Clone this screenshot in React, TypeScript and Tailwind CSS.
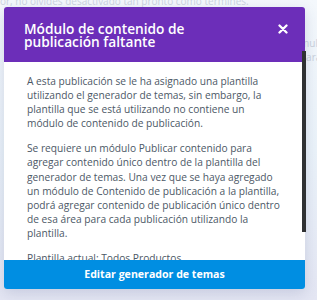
import React from "react";

const font = { fontFamily: '"Open Sans", "Noto Sans", sans-serif' };

function CloseIcon() {
  return (
    <svg width="10" height="10" viewBox="0 0 10 10" className="block">
      <path d="M1.5 1.5 L8.5 8.5 M8.5 1.5 L1.5 8.5" stroke="#fff" strokeWidth="2.3" strokeLinecap="round" />
    </svg>
  );
}

export default function App() {
  return (
    <div
      className="relative w-[317px] h-[300px] overflow-hidden bg-gradient-to-b from-[#f4f8fc] via-[#eaf2f9] to-[#e4e6f3]"
      style={font}
    >
      {/* page behind the overlay */}
      <div className="absolute left-0 top-[-6px] text-[10px] text-[#ccd4df] whitespace-nowrap">
        or, no olvides desactivado tan pronto como termines.
      </div>
      <div className="absolute left-[300px] top-[36px] text-[10px] leading-[14px] text-[#c9d0db] whitespace-nowrap">
        <div>multi</div>
        <div>para</div>
      </div>

      <div className="relative pt-[7px] pl-[4px]">
        <div className="w-[301px] rounded-[3px] overflow-hidden bg-white shadow-[0_4px_14px_rgba(60,70,130,0.18)]">
          {/* header */}
          <div className="h-[55px] bg-[#6c2eb9] flex items-start justify-between pl-[20px] pr-[16px] pt-[15px]">
            <h2 className="text-[13.7px] leading-[13px] font-semibold text-white">
              Módulo de contenido de
              <br />
              publicación faltante
            </h2>
            <div className="pt-[2px] pr-[1px]">
              <CloseIcon />
            </div>
          </div>

          {/* body */}
          <div className="h-[198px] overflow-hidden pl-[23px] pr-[22px] pt-[12px] text-[10.2px] leading-[14.1px] text-[#4c5866]">
            <p>
              A esta publicación se le ha asignado una plantilla utilizando el generador de temas, sin embargo, la
              plantilla que se está utilizando no contiene un módulo de contenido de publicación.
            </p>
            <p className="mt-[11px]">
              Se requiere un módulo Publicar contenido para agregar contenido único dentro de la plantilla del
              generador de temas. Una vez que se haya agregado un módulo de Contenido de publicación a la plantilla,
              podrá agregar contenido de publicación único dentro de esa área para cada publicación utilizando la
              plantilla.
            </p>
            <p className="mt-[11px]">Plantilla actual: Todos Productos</p>
          </div>

          {/* footer button */}
          <button className="w-full h-[29px] bg-[#008ee2] text-white text-[10.6px] font-bold flex items-center justify-center">
            Editar generador de temas
          </button>
        </div>
      </div>

      {/* dark scrollbar over the modal edge */}
      <div className="absolute left-[302px] top-[51px] w-[4px] h-[181px] bg-[#2f3133]" />
    </div>
  );
}
